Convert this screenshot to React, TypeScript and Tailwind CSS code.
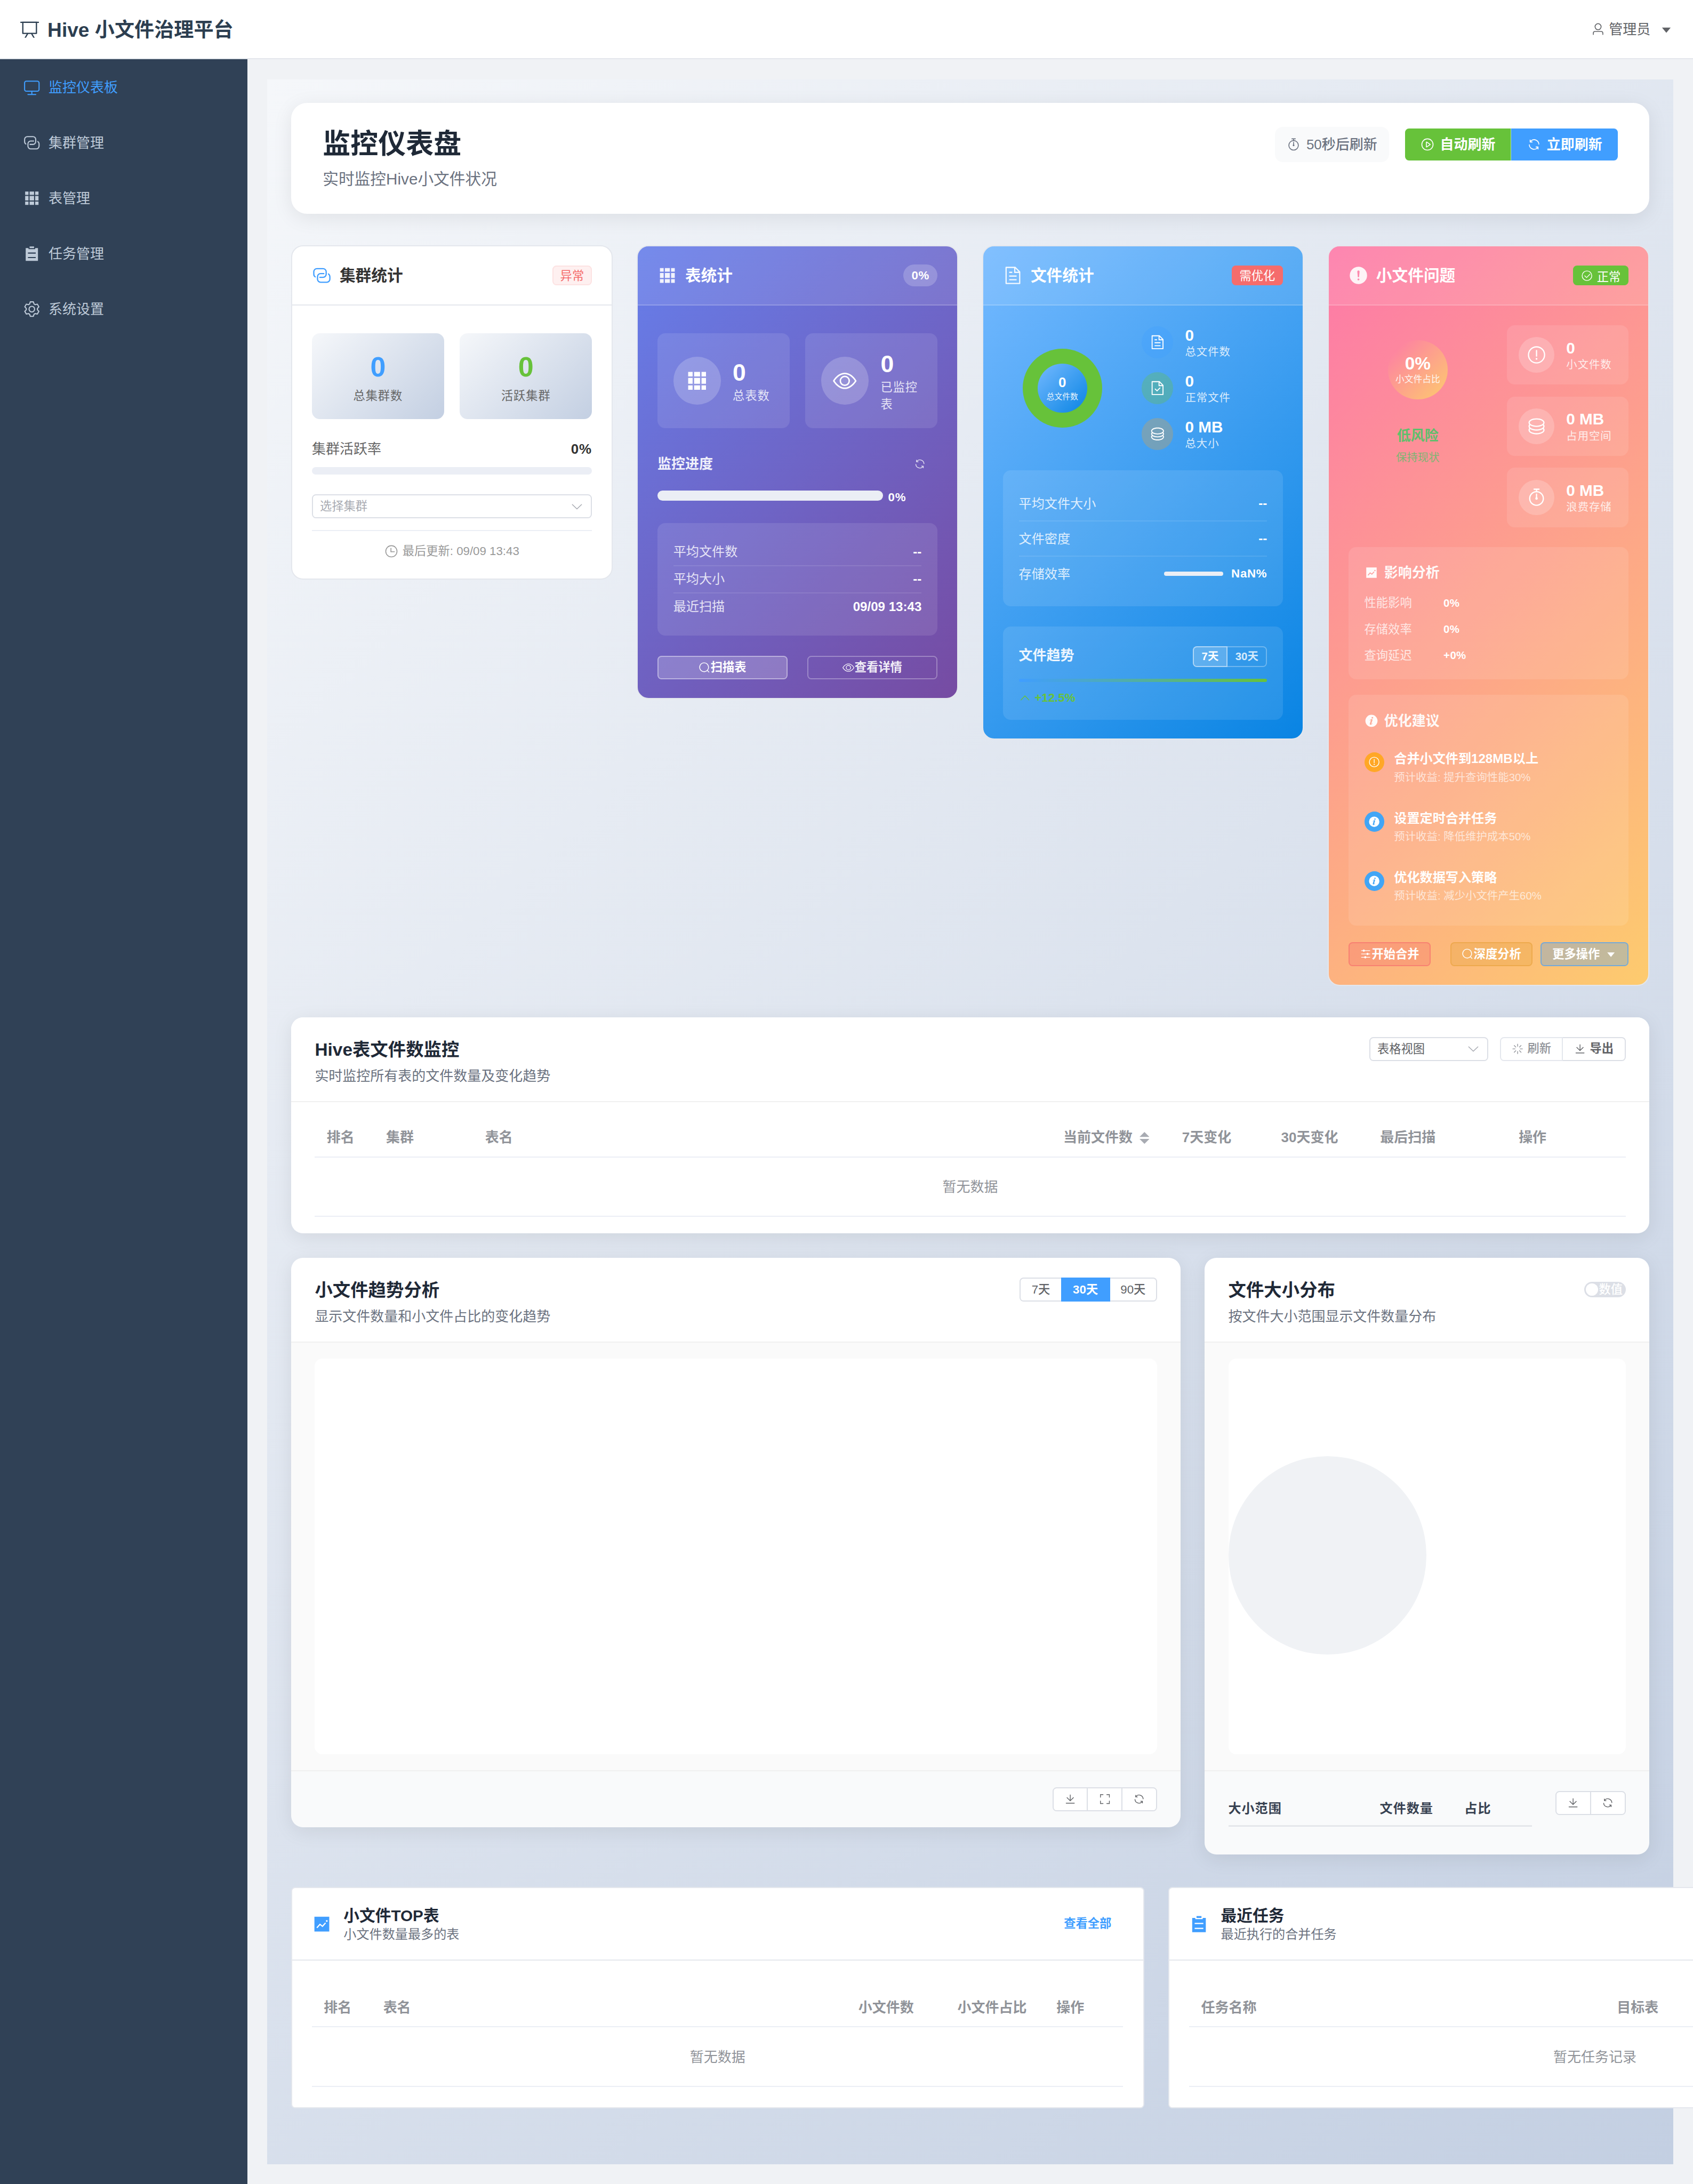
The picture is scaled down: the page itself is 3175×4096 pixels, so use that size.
import React from 'react';

const PATHS = {
  board: [
    'M32 128h960v64H32z',
    'M192 192v512h640V192zm-64-64h768v608a32 32 0 0 1-32 32H160a32 32 0 0 1-32-32z',
    'M322.176 960H248.32l144.64-250.56 55.424 32zm453.888 0h-73.856L576 741.44l55.424-32z',
  ],
  monitor: [
    'M544 768v128h192a32 32 0 1 1 0 64H288a32 32 0 1 1 0-64h192V768H192A128 128 0 0 1 64 640V256a128 128 0 0 1 128-128h640a128 128 0 0 1 128 128v384a128 128 0 0 1-128 128zM192 192a64 64 0 0 0-64 64v384a64 64 0 0 0 64 64h640a64 64 0 0 0 64-64V256a64 64 0 0 0-64-64z',
  ],
  connection: [
    'M640 384v64H448a128 128 0 0 0-128 128v128a128 128 0 0 0 128 128h320a128 128 0 0 0 128-128V576a128 128 0 0 0-64-110.848V394.88c74.56 26.368 128 97.472 128 181.056v128a192 192 0 0 1-192 192H448a192 192 0 0 1-192-192V576a192 192 0 0 1 192-192z',
    'M384 640v-64h192a128 128 0 0 0 128-128V320a128 128 0 0 0-128-128H256a128 128 0 0 0-128 128v128a128 128 0 0 0 64 110.848v70.272A192.064 192.064 0 0 1 64 448V320a192 192 0 0 1 192-192h320a192 192 0 0 1 192 192v128a192 192 0 0 1-192 192z',
  ],
  grid: [
    'M640 384v256H384V384zm64 0h192v256H704zm-64 512H384V704h256zm64 0V704h192v192zm-64-768v192H384V128zm64 0h192v192H704zM320 384v256H128V384zm0 512H128V704h192zm0-768v192H128V128z',
  ],
  list: ['M704 192h160v736H160V192h160v64h384zM288 512h448v-64H288zm0 256h448v-64H288zm96-576V96h256v96z'],
  setting: [
    'M600.704 64a32 32 0 0 1 30.464 22.208l35.2 109.376c14.784 7.232 28.928 15.36 42.432 24.512l112.384-24.192a32 32 0 0 1 34.432 15.36L944.32 364.8a32 32 0 0 1-4.032 37.504l-77.12 85.12a357.12 357.12 0 0 1 0 49.024l77.12 85.248a32 32 0 0 1 4.032 37.504l-88.704 153.6a32 32 0 0 1-34.432 15.296L708.8 803.904c-13.44 9.088-27.648 17.28-42.368 24.512l-35.264 109.376A32 32 0 0 1 600.704 960H423.296a32 32 0 0 1-30.464-22.208L357.696 828.48a351.616 351.616 0 0 1-42.56-24.64l-112.32 24.256a32 32 0 0 1-34.432-15.36L79.68 659.2a32 32 0 0 1 4.032-37.504l77.12-85.248a357.12 357.12 0 0 1 0-48.896l-77.12-85.248A32 32 0 0 1 79.68 364.8l88.704-153.6a32 32 0 0 1 34.432-15.296l112.32 24.256c13.568-9.152 27.776-17.408 42.56-24.64l35.2-109.312A32 32 0 0 1 423.232 64H600.64zm-23.424 64H446.72l-36.352 113.088-24.512 11.968a294.113 294.113 0 0 0-34.816 20.096l-22.656 15.36-116.224-25.088-65.28 113.152 79.68 88.192-1.92 27.136a293.12 293.12 0 0 0 0 40.192l1.92 27.136-79.808 88.192 65.344 113.152 116.224-25.024 22.656 15.296a294.113 294.113 0 0 0 34.816 20.096l24.512 11.968L446.72 896h130.688l36.48-113.152 24.448-11.904a288.282 288.282 0 0 0 34.752-20.096l22.592-15.296 116.288 25.024 65.28-113.152-79.744-88.192 1.92-27.136a293.12 293.12 0 0 0 0-40.256l-1.92-27.136 79.808-88.128-65.344-113.152-116.288 24.96-22.592-15.232a287.616 287.616 0 0 0-34.752-20.096l-24.448-11.904L577.344 128zM512 320a192 192 0 1 1 0 384 192 192 0 0 1 0-384m0 64a128 128 0 1 0 0 256 128 128 0 0 0 0-256',
  ],
  user: [
    'M512 512a192 192 0 1 0 0-384 192 192 0 0 0 0 384m0 64a256 256 0 1 1 0-512 256 256 0 0 1 0 512m320 320v-96a96 96 0 0 0-96-96H288a96 96 0 0 0-96 96v96a32 32 0 1 1-64 0v-96a160 160 0 0 1 160-160h448a160 160 0 0 1 160 160v96a32 32 0 1 1-64 0',
  ],
  caret: ['m192 384 320 384 320-384z'],
  timer: [
    'M512 896a320 320 0 1 0 0-640 320 320 0 0 0 0 640m0 64a384 384 0 1 1 0-768 384 384 0 0 1 0 768',
    'M512 320a32 32 0 0 1 32 32l-.512 224a32 32 0 1 1-64 0L480 352a32 32 0 0 1 32-32',
    'M448 576a64 64 0 1 0 128 0 64 64 0 1 0-128 0m96-448v128h-64V128h-96a32 32 0 0 1 0-64h256a32 32 0 1 1 0 64z',
  ],
  play: [
    'M512 64a448 448 0 1 1 0 896 448 448 0 0 1 0-896m0 832a384 384 0 0 0 0-768 384 384 0 0 0 0 768m-48-247.616L668.608 512 464 375.616zm10.624-342.656 249.472 166.336a48 48 0 0 1 0 79.872L474.624 718.272A48 48 0 0 1 400 678.336V345.6a48 48 0 0 1 74.624-39.936z',
  ],
  refresh: [
    'M771.776 794.88A384 384 0 0 1 128 512h64a320 320 0 0 0 555.712 216.448H654.72a32 32 0 1 1 0-64h149.056a32 32 0 0 1 32 32v148.928a32 32 0 1 1-64 0v-50.56zM276.288 295.616h92.992a32 32 0 0 1 0 64H220.16a32 32 0 0 1-32-32V178.56a32 32 0 0 1 64 0v50.56A384 384 0 0 1 896.128 512h-64a320 320 0 0 0-555.776-216.384z',
  ],
  view: [
    'M512 160c320 0 512 352 512 352S832 864 512 864 0 512 0 512s192-352 512-352m0 64c-225.28 0-384.128 208.064-436.8 288 52.608 79.872 211.456 288 436.8 288 225.28 0 384.128-208.064 436.8-288-52.608-79.872-211.456-288-436.8-288m0 64a224 224 0 1 1 0 448 224 224 0 0 1 0-448m0 64a160.192 160.192 0 0 0-160 160c0 88.192 71.744 160 160 160s160-71.808 160-160-71.744-160-160-160',
  ],
  search: [
    'm795.904 750.72 124.992 124.928a32 32 0 0 1-45.248 45.248L750.656 795.904a416 416 0 1 1 45.248-45.248zM480 832a352 352 0 1 0 0-704 352 352 0 0 0 0 704',
  ],
  document: [
    'M832 384H576V128H192v768h640zm-26.496-64L640 154.496V320zM160 64h480l256 256v608a32 32 0 0 1-32 32H160a32 32 0 0 1-32-32V96a32 32 0 0 1 32-32m160 448h384v64H320zm0-192h160v64H320zm0 384h384v64H320z',
  ],
  docChecked: [
    'M805.504 320 640 154.496V320zM832 384H576V128H192v768h640zM160 64h480l256 256v608a32 32 0 0 1-32 32H160a32 32 0 0 1-32-32V96a32 32 0 0 1 32-32m318.4 582.144 180.992-180.992L704.64 510.4 478.4 736.64 320 578.304l45.248-45.312z',
  ],
  coin: [
    'm161.92 580.736 29.888 58.88C171.328 659.776 160 681.728 160 704c0 82.304 155.328 160 352 160s352-77.696 352-160c0-22.272-11.392-44.16-31.808-64.32l30.464-58.432C903.936 615.808 928 657.664 928 704c0 129.728-188.544 224-416 224S96 833.728 96 704c0-46.592 24.32-88.576 65.92-123.264z',
    'm161.92 388.736 29.888 58.88C171.328 467.84 160 489.792 160 512c0 82.304 155.328 160 352 160s352-77.696 352-160c0-22.272-11.392-44.16-31.808-64.32l30.464-58.432C903.936 423.808 928 465.664 928 512c0 129.728-188.544 224-416 224S96 641.728 96 512c0-46.592 24.32-88.576 65.92-123.264z',
    'M512 544c-227.456 0-416-94.272-416-224S284.544 96 512 96s416 94.272 416 224-188.544 224-416 224m0-64c196.672 0 352-77.696 352-160S708.672 160 512 160s-352 77.696-352 160 155.328 160 352 160',
  ],
  warningFilled: [
    'M512 64a448 448 0 1 1 0 896 448 448 0 0 1 0-896m0 192a58.432 58.432 0 0 0-58.24 63.744l23.36 256.384a35.072 35.072 0 0 0 69.76 0l23.296-256.384A58.432 58.432 0 0 0 512 256m0 512a51.2 51.2 0 1 0 0-102.4 51.2 51.2 0 0 0 0 102.4',
  ],
  warning: [
    'M512 64a448 448 0 1 1 0 896 448 448 0 0 1 0-896m0 832a384 384 0 0 0 0-768 384 384 0 0 0 0 768m48-176a48 48 0 1 1-96 0 48 48 0 0 1 96 0m-48-464a32 32 0 0 1 32 32v288a32 32 0 0 1-64 0V288a32 32 0 0 1 32-32',
  ],
  check: [
    'M512 896a384 384 0 1 0 0-768 384 384 0 0 0 0 768m0 64a448 448 0 1 1 0-896 448 448 0 0 1 0 896',
    'M745.344 361.344a32 32 0 0 1 45.312 45.312l-288 288a32 32 0 0 1-45.312 0l-160-160a32 32 0 1 1 45.312-45.312L480 626.752z',
  ],
  clock: [
    'M512 896a384 384 0 1 0 0-768 384 384 0 0 0 0 768m0 64a448 448 0 1 1 0-896 448 448 0 0 1 0 896',
    'M480 256a32 32 0 0 1 32 32v256a32 32 0 0 1-64 0V288a32 32 0 0 1 32-32',
    'M480 512h256q32 0 32 32t-32 32H480q-32 0-32-32t32-32',
  ],
  arrowDown: [
    'M831.872 340.864 512 652.672 192.128 340.864a30.592 30.592 0 0 0-42.752 0 29.12 29.12 0 0 0 0 41.6L489.664 714.24a32 32 0 0 0 44.672 0l340.288-331.712a29.12 29.12 0 0 0 0-41.728 30.592 30.592 0 0 0-42.752 0z',
  ],
  arrowUp: [
    'm488.832 344.32-339.84 356.672a32 32 0 0 0 0 44.16l.384.384a29.44 29.44 0 0 0 42.688 0l320-335.872 319.872 335.872a29.44 29.44 0 0 0 42.688 0l.384-.384a32 32 0 0 0 0-44.16L535.168 344.32a32 32 0 0 0-46.336 0',
  ],
  trend: [
    'M128 896V128h768v768zm291.712-327.296 128 102.4 180.16-201.792-47.744-42.624-139.84 156.608-128-102.4-180.16 201.792 47.744 42.624 139.84-156.608zM816 352a48 48 0 1 0-96 0 48 48 0 0 0 96 0',
  ],
  info: [
    'M512 64a448 448 0 1 1 0 896.064A448 448 0 0 1 512 64m67.2 275.072c33.28 0 60.288-23.104 60.288-57.344s-27.072-57.344-60.288-57.344c-33.28 0-60.16 23.104-60.16 57.344s26.88 57.344 60.16 57.344M590.912 699.2c0-6.848 2.368-24.64 1.024-34.752l-52.608 60.544c-10.88 11.456-24.512 19.392-30.912 17.28a12.992 12.992 0 0 1-8.256-14.72l87.68-276.992c7.168-35.136-12.544-67.2-54.336-71.296-44.096 0-108.992 44.736-148.48 101.504 0 6.784-1.28 23.68.064 33.792l52.544-60.608c10.88-11.328 23.552-19.328 29.952-17.152a12.8 12.8 0 0 1 7.808 16.128L388.48 728.576c-10.048 32.256 8.96 63.872 55.04 71.04 67.84 0 107.904-43.648 147.456-100.416z',
  ],
  operation: [
    'M389.44 768a96.064 96.064 0 0 1 181.12 0H896v64H570.56a96.064 96.064 0 0 1-181.12 0H128v-64zm192-288a96.064 96.064 0 0 1 181.12 0H896v64H762.56a96.064 96.064 0 0 1-181.12 0H128v-64zm-320-288a96.064 96.064 0 0 1 181.12 0H896v64H442.56a96.064 96.064 0 0 1-181.12 0H128v-64z',
  ],
  download: [
    'M160 832h704a32 32 0 1 1 0 64H160a32 32 0 1 1 0-64m384-253.696 236.288-236.352 45.248 45.248L508.8 704 192 387.2l45.248-45.248L480 584.704V128h64z',
  ],
  fullscreen: [
    'm160 96.064 192 .192a32 32 0 0 1 0 64l-192-.192V352a32 32 0 0 1-64 0V96h64zm0 831.872V928H96V672a32 32 0 1 1 64 0v191.936l192-.192a32 32 0 1 1 0 64zM864 96.064V96h64v256a32 32 0 1 1-64 0V160.064l-192 .192a32 32 0 1 1 0-64zm0 831.872-192-.192a32 32 0 0 1 0-64l192 .192V672a32 32 0 1 1 64 0v256h-64z',
  ],
  loading: [
    'M512 64a32 32 0 0 1 32 32v192a32 32 0 0 1-64 0V96a32 32 0 0 1 32-32m0 640a32 32 0 0 1 32 32v192a32 32 0 1 1-64 0V736a32 32 0 0 1 32-32m448-192a32 32 0 0 1-32 32H736a32 32 0 1 1 0-64h192a32 32 0 0 1 32 32m-640 0a32 32 0 0 1-32 32H96a32 32 0 0 1 0-64h192a32 32 0 0 1 32 32M195.2 195.2a32 32 0 0 1 45.248 0L376.32 331.008a32 32 0 0 1-45.248 45.248L195.2 240.448a32 32 0 0 1 0-45.248zm452.544 452.544a32 32 0 0 1 45.248 0L828.8 783.552a32 32 0 0 1-45.248 45.248L647.744 692.992a32 32 0 0 1 0-45.248zM828.8 195.264a32 32 0 0 1 0 45.184L692.992 376.32a32 32 0 0 1-45.248-45.248l135.808-135.808a32 32 0 0 1 45.248 0m-452.544 452.48a32 32 0 0 1 0 45.248L240.448 828.8a32 32 0 0 1-45.248-45.248l135.808-135.808a32 32 0 0 1 45.248 0z',
  ],
} satisfies Record<string, string[]>;

type IconName = keyof typeof PATHS;

function Icon({ name, className = '' }: { name: IconName; className?: string }) {
  return (
    <svg viewBox="0 0 1024 1024" fill="currentColor" className={`shrink-0 ${className}`}>
      {PATHS[name].map((d) => (
        <path key={d.slice(0, 24)} d={d} />
      ))}
    </svg>
  );
}

const MENU: { icon: IconName; label: string; active?: boolean }[] = [
  { icon: 'monitor', label: '监控仪表板', active: true },
  { icon: 'connection', label: '集群管理' },
  { icon: 'grid', label: '表管理' },
  { icon: 'list', label: '任务管理' },
  { icon: 'setting', label: '系统设置' },
];

function TopBar() {
  return (
    <header className="flex h-[60px] shrink-0 items-center justify-between border-b-[1.08px] border-[#e4e7ed] bg-white px-5">
      <div className="flex items-center gap-2 text-[#2c3e50]">
        <Icon name="board" className="size-5" />
        <h1 className="pt-0.5 text-xl font-bold">Hive 小文件治理平台</h1>
      </div>
      <div className="flex items-center text-sm leading-5 text-[#606266]">
        <Icon name="user" className="mr-1 size-3.5" />
        <span className="pt-px">管理员</span>
        <Icon name="caret" className="ml-[9px] size-3.5" />
      </div>
    </header>
  );
}

function Sidebar() {
  return (
    <aside className="w-[250px] shrink-0 bg-[#304156]">
      {MENU.map((m) => (
        <div
          key={m.label}
          className={`flex h-14 items-center px-5 text-sm ${m.active ? 'text-[#409eff]' : 'text-[#bfcbd9]'}`}
        >
          <span className="mr-[5px] flex w-6 justify-center">
            <Icon name={m.icon} className="size-[18px]" />
          </span>
          <span className="pt-px">{m.label}</span>
        </div>
      ))}
    </aside>
  );
}

function PageHeader() {
  return (
    <section className="flex h-28 items-start justify-between rounded-2xl bg-white px-8 py-6 shadow-[0_4px_20px_rgba(0,0,0,0.08)]">
      <div>
        <h2 className="pt-px text-[28px] leading-[34px] font-bold text-[#1f2937]">监控仪表盘</h2>
        <p className="mt-[7px] text-base leading-[22px] text-[#6b7280]">实时监控Hive小文件状况</p>
      </div>
      <div className="flex items-center gap-4">
        <div className="flex h-9 items-center gap-1.5 rounded-lg bg-[#f9fafb] px-3 text-sm text-[#6b7280]">
          <Icon name="timer" className="size-3.5" />
          <span className="pt-px font-medium">50秒后刷新</span>
        </div>
        <div className="flex h-8 text-sm font-bold text-white">
          <button className="flex w-[107.5px] items-center justify-center gap-1.5 rounded-l border-r border-white/50 bg-[#67c23a]">
            <Icon name="play" className="size-3.5" />
            <span className="pt-px">自动刷新</span>
          </button>
          <button className="flex w-[107.5px] items-center justify-center gap-1.5 rounded-r bg-[#409eff]">
            <Icon name="refresh" className="size-3.5" />
            <span className="pt-px">立即刷新</span>
          </button>
        </div>
      </div>
    </section>
  );
}

function StatCard({
  icon,
  title,
  tag,
  tone,
  children,
}: {
  icon: IconName;
  title: string;
  tag: React.ReactNode;
  tone: string;
  children: React.ReactNode;
}) {
  const plain = tone === 'bg-white';
  return (
    <article className={`flex w-[325px] flex-col overflow-hidden rounded-xl border-[1.08px] border-[#e4e7ed] ${tone}`}>
      <div
        className={`flex h-[59.5px] shrink-0 items-center justify-between border-b-[1.08px] px-5 ${
          plain ? 'border-[#e4e7ed] text-[#333]' : 'border-white/20 bg-white/10 text-white'
        }`}
      >
        <div className="flex items-center gap-2">
          <Icon name={icon} className={`size-5 ${plain ? 'text-[#409eff]' : 'opacity-90'}`} />
          <h3 className="pt-px text-base font-bold">{title}</h3>
        </div>
        {tag}
      </div>
      <div className="flex flex-col px-5">{children}</div>
    </article>
  );
}

function ClusterCard() {
  const boxes = [
    { label: '总集群数', color: 'text-[#409eff]' },
    { label: '活跃集群', color: 'text-[#67c23a]' },
  ];
  return (
    <StatCard
      icon="connection"
      title="集群统计"
      tone="bg-white"
      tag={
        <span className="flex h-5 items-center rounded border-[1.08px] border-[#fde2e2] bg-[#fef0f0] px-[7px] text-xs text-[#f56c6c]">
          <span className="pt-px">异常</span>
        </span>
      }
    >
      <div className="mt-7 flex gap-4">
        {boxes.map((b) => (
          <div
            key={b.label}
            className="flex h-[87px] flex-1 flex-col items-center rounded-lg bg-linear-[135deg,#f5f7fa,#c3cfe2] pt-4"
          >
            <span className={`text-[28px] leading-[36px] font-bold ${b.color}`}>0</span>
            <span className="mt-[3px] text-xs leading-[17px] tracking-[0.5px] text-[#666]">{b.label}</span>
          </div>
        ))}
      </div>
      <div className="mt-5 flex h-5 items-center justify-between pt-px text-sm">
        <span className="text-[#666]">集群活跃率</span>
        <span className="font-bold tracking-[0.5px] text-[#333]">0%</span>
      </div>
      <div className="mt-2 h-2 rounded-full bg-[#ebeef5]" />
      <div className="mt-5 flex h-6 items-center justify-between rounded border-[1.08px] border-[#dcdfe6] px-[7px] text-xs text-[#a8abb2]">
        选择集群
        <Icon name="arrowDown" className="size-3.5" />
      </div>
      <div className="mt-3 mb-[19.5px] flex items-center justify-center gap-1 border-t-[1.08px] border-[#ebeef5] pt-3 text-xs leading-[16.5px] text-[#999]">
        <Icon name="clock" className="size-3.5" />
        最后更新: 09/09 13:43
      </div>
    </StatCard>
  );
}

function TableStatsCard() {
  const rows = [
    ['平均文件数', '--'],
    ['平均大小', '--'],
    ['最近扫描', '09/09 13:43'],
  ];
  const boxes: { icon: IconName; label: string }[] = [
    { icon: 'grid', label: '总表数' },
    { icon: 'view', label: '已监控表' },
  ];
  return (
    <StatCard
      icon="grid"
      title="表统计"
      tone="bg-linear-[135deg,#667eea,#764ba2]"
      tag={
        <span className="flex h-[22.4px] w-[34.4px] items-center justify-center rounded-full bg-white/20 text-xs font-bold tracking-[0.3px]">
          0%
        </span>
      }
    >
      <div className="mt-7 flex gap-4">
        {boxes.map((b) => (
          <div key={b.label} className="flex h-24 flex-1 items-center gap-3 rounded-lg bg-white/10 px-4">
            <span className="flex size-12 shrink-0 items-center justify-center rounded-full bg-white/20 text-white">
              <Icon name={b.icon} className="size-6" />
            </span>
            <div>
              <div className="text-2xl leading-[30.8px] font-bold text-white">0</div>
              <div className="text-xs leading-[16.8px] tracking-[0.5px] text-white/80">{b.label}</div>
            </div>
          </div>
        ))}
      </div>
      <div className="mt-6 flex h-6 items-center justify-between pr-3">
        <span className="pt-px text-sm font-bold text-white/90">监控进度</span>
        <Icon name="refresh" className="size-3 text-white/80" />
      </div>
      <div className="mt-[13px] flex h-3.5 items-center gap-[5px]">
        <div className="h-2.5 w-[228px] rounded-full bg-[#ebeef5]" />
        <span className="mt-1 text-xs leading-none font-bold tracking-[0.5px] text-white">0%</span>
      </div>
      <div className="mt-[21px] h-[113.3px] rounded-lg bg-white/10 p-4 text-[13px]">
        {rows.map(([k, v], i) => (
          <div
            key={k}
            className={`flex h-[27.4px] items-center justify-between ${i < 2 ? 'border-b-[1.08px] border-white/10' : ''}`}
          >
            <span className="text-white/80">{k}</span>
            <span className="font-bold text-white">{v}</span>
          </div>
        ))}
      </div>
      <div className="mt-[20.4px] mb-[19px] flex gap-5 text-xs font-bold">
        <button className="flex h-6 flex-1 items-center justify-center rounded border-[1.08px] border-white/40 bg-white/20 text-white">
          <Icon name="search" className="size-3" />
          扫描表
        </button>
        <button className="flex h-6 flex-1 items-center justify-center rounded border-[1.08px] border-white/30 text-white/90">
          <Icon name="view" className="size-3" />
          查看详情
        </button>
      </div>
    </StatCard>
  );
}

function FileStatsCard() {
  const items: { icon: IconName; value: string; label: string; bg: string }[] = [
    { icon: 'document', value: '0', label: '总文件数', bg: 'bg-[#409eff]/30' },
    { icon: 'docChecked', value: '0', label: '正常文件', bg: 'bg-[#67c23a]/30' },
    { icon: 'coin', value: '0 MB', label: '总大小', bg: 'bg-[#e6a23c]/30' },
  ];
  return (
    <StatCard
      icon="document"
      title="文件统计"
      tone="bg-linear-[135deg,#74b9ff,#0984e3]"
      tag={
        <span className="flex h-5 items-center rounded bg-[#f56c6c] px-2 text-xs text-white">
          <span className="pt-px">需优化</span>
        </span>
      }
    >
      <div className="mt-5 flex gap-5">
        <div className="flex w-[120px] items-center justify-center">
          <div className="flex size-20 items-center justify-center rounded-full bg-[#67c23a]">
            <div className="flex size-[50px] flex-col items-center justify-center rounded-full bg-linear-[135deg,#74b9ff,#0984e3] text-white">
              <span className="text-sm leading-[17px] font-bold">0</span>
              <span className="text-[8px] leading-[11px] opacity-90">总文件数</span>
            </div>
          </div>
        </div>
        <div className="flex flex-col gap-3">
          {items.map((it) => (
            <div key={it.label} className="flex h-[34.4px] items-center gap-3 text-white">
              <span className={`flex size-8 items-center justify-center rounded-full ${it.bg}`}>
                <Icon name={it.icon} className="size-4" />
              </span>
              <div>
                <div className="text-base leading-5 font-bold">{it.value}</div>
                <div className="text-[11px] leading-[14.4px] tracking-[0.5px] opacity-80">{it.label}</div>
              </div>
            </div>
          ))}
        </div>
      </div>
      <div className="mt-[19.5px] h-[137px] rounded-lg bg-white/10 p-4 text-[13px]">
        {['平均文件大小', '文件密度'].map((k) => (
          <div key={k} className="flex h-[35.5px] items-center justify-between border-b-[1.08px] border-white/10">
            <span className="pt-px text-white/80">{k}</span>
            <span className="font-bold text-white">--</span>
          </div>
        ))}
        <div className="flex h-[34.5px] items-center">
          <span className="flex-1 pt-px text-white/80">存储效率</span>
          <span className="mr-2 h-1 w-[60px] rounded-full bg-[#ebeef5]" />
          <span className="text-xs font-bold tracking-[0.4px] text-white">NaN%</span>
        </div>
      </div>
      <div className="mt-[20.5px] mb-[19px] h-[94.5px] rounded-lg bg-white/10 px-4 pt-4">
        <div className="flex h-[29px] items-center justify-between">
          <span className="pb-[2px] text-sm font-bold text-white/90">文件趋势</span>
          <div className="flex h-[21px] text-[11px] font-bold">
            <span className="flex w-[35.2px] items-center justify-center rounded-l border-[1.08px] border-white/50 bg-white/20 text-white">
              7天
            </span>
            <span className="flex w-10 items-center justify-center rounded-r border-[1.08px] border-l-0 border-white/30 text-white/80">
              30天
            </span>
          </div>
        </div>
        <div className="mt-2 h-[3px] rounded-full bg-linear-[90deg,#409eff,#67c23a]" />
        <div className="mt-2 flex h-4 items-center gap-1 text-xs font-bold text-[#67c23a]">
          <Icon name="arrowUp" className="size-3" />
          +12.5%
        </div>
      </div>
    </StatCard>
  );
}

function SmallFileCard() {
  const metrics: { icon: IconName; value: string; label: string }[] = [
    { icon: 'warning', value: '0', label: '小文件数' },
    { icon: 'coin', value: '0 MB', label: '占用空间' },
    { icon: 'timer', value: '0 MB', label: '浪费存储' },
  ];
  const impact = [
    ['性能影响', '0%'],
    ['存储效率', '0%'],
    ['查询延迟', '+0%'],
  ];
  const tips: { icon: IconName; bg: string; title: string; gain: string }[] = [
    { icon: 'warning', bg: 'bg-[#ffa726]', title: '合并小文件到128MB以上', gain: '预计收益: 提升查询性能30%' },
    { icon: 'info', bg: 'bg-[#42a5f5]', title: '设置定时合并任务', gain: '预计收益: 降低维护成本50%' },
    { icon: 'info', bg: 'bg-[#42a5f5]', title: '优化数据写入策略', gain: '预计收益: 减少小文件产生60%' },
  ];
  return (
    <StatCard
      icon="warningFilled"
      title="小文件问题"
      tone="bg-linear-[135deg,#fd79a8,#fdcb6e]"
      tag={
        <span className="flex h-5 items-center gap-1 rounded bg-[#67c23a] px-2 text-xs text-white">
          <Icon name="check" className="size-3" />
          <span className="mt-[3px]">正常</span>
        </span>
      }
    >
      <div className="mt-5 flex gap-5">
        <div className="flex w-[140px] flex-col items-center pt-[15px]">
          <div className="flex size-[60px] flex-col items-center justify-center rounded-full bg-linear-[135deg,#fd79a8,#fdcb6e] text-white">
            <span className="text-lg leading-5 font-bold">0%</span>
            <span className="text-[9px] leading-[13px] opacity-90">小文件占比</span>
          </div>
          <span className="mt-[27px] text-sm leading-5 font-bold text-[#5fbf6c]">低风险</span>
          <span className="mt-1 text-[11px] leading-4 text-[#5fbf6c] opacity-80">保持现状</span>
        </div>
        <div className="flex flex-1 flex-col gap-3">
          {metrics.map((m) => (
            <div key={m.label} className="flex h-[60px] items-center gap-3 rounded-lg bg-white/10 px-3 text-white">
              <span className="flex size-9 items-center justify-center rounded-full bg-white/20">
                <Icon name={m.icon} className="size-5" />
              </span>
              <div>
                <div className="text-base leading-5 font-bold">{m.value}</div>
                <div className="text-[11px] leading-[14.4px] tracking-[0.5px] opacity-80">{m.label}</div>
              </div>
            </div>
          ))}
        </div>
      </div>
      <div className="mt-5 h-[133.5px] rounded-lg bg-white/10 p-4">
        <div className="flex h-5 items-center gap-1.5 text-sm font-bold text-white/95">
          <Icon name="trend" className="size-3.5" />
          <span className="pt-px">影响分析</span>
        </div>
        <div className="mt-3 flex flex-col gap-2.5">
          {impact.map(([k, v]) => (
            <div key={k} className="flex h-[16.5px] items-center pt-px">
              <span className="w-20 text-xs text-white/75">{k}</span>
              <span className="text-[11px] font-bold tracking-[0.2px] text-white">{v}</span>
            </div>
          ))}
        </div>
      </div>
      <div className="mt-4 h-[233px] rounded-lg bg-white/10 p-4">
        <div className="mb-[9px] flex h-5 items-center gap-1.5 text-sm font-bold text-white/95">
          <Icon name="info" className="size-3.5" />
          <span className="pt-px">优化建议</span>
        </div>
        {tips.map((t) => (
          <div key={t.title} className="flex h-[60px] gap-2.5 pt-[10.5px] text-white">
            <span className={`mt-[2.5px] flex size-5 items-center justify-center rounded-full ${t.bg}`}>
              <Icon name={t.icon} className="size-3" />
            </span>
            <div>
              <div className="text-[13px] leading-[18px] font-bold">{t.title}</div>
              <div className="mt-0.5 text-[11px] leading-4 opacity-65">{t.gain}</div>
            </div>
          </div>
        ))}
      </div>
      <div className="mt-[16.8px] mb-[19px] flex text-xs font-bold text-white">
        <button className="flex h-6 w-[83px] items-center justify-center rounded border-[1.08px] border-[#f56c6c]/60 bg-[#f56c6c]/30">
          <Icon name="operation" className="size-3" />
          开始合并
        </button>
        <button className="ml-5 flex h-6 w-[83px] items-center justify-center rounded border-[1.08px] border-[#e6a23c]/60 bg-[#e6a23c]/30">
          <Icon name="search" className="size-3" />
          深度分析
        </button>
        <button className="ml-2 flex h-6 flex-1 items-center justify-center gap-[5px] rounded border-[1.08px] border-[#409eff]/60 bg-[#409eff]/30">
          更多操作
          <Icon name="caret" className="size-3" />
        </button>
      </div>
    </StatCard>
  );
}

function PanelHead({ title, sub, children }: { title: string; sub: string; children: React.ReactNode }) {
  return (
    <div className="flex h-[85.5px] shrink-0 items-start justify-between border-b-[1.08px] border-[#f0f0f0] bg-white px-6 pt-5">
      <div className="pt-[0.6px]">
        <h3 className="text-lg leading-[25px] font-bold text-[#1f2937]">{title}</h3>
        <p className="mt-1 text-sm leading-5 text-[#6b7280]">{sub}</p>
      </div>
      {children}
    </div>
  );
}

function HiveTable() {
  const head = 'text-sm font-bold text-[#909399] pl-3 shrink-0';
  return (
    <section className="mt-8 flex h-[218px] flex-col overflow-hidden rounded-xl bg-white">
      <PanelHead title="Hive表文件数监控" sub="实时监控所有表的文件数量及变化趋势">
        <div className="flex gap-3">
          <div className="flex h-6 w-[120px] items-center justify-between rounded border-[1.08px] border-[#dcdfe6] px-[7px] text-xs text-[#606266]">
            <span className="pt-px">表格视图</span>
            <Icon name="arrowDown" className="size-3.5 text-[#a8abb2]" />
          </div>
          <div className="flex h-6 text-xs font-bold">
            <button className="flex w-[63.5px] items-center justify-center gap-1 rounded-l border-[1.08px] border-[#e4e7ed] font-medium text-[#909399]">
              <Icon name="loading" className="size-3" />
              刷新
            </button>
            <button className="flex w-[63.5px] items-center justify-center gap-1 rounded-r border-[1.08px] border-l-0 border-[#dcdfe6] text-[#606266]">
              <Icon name="download" className="size-3" />
              导出
            </button>
          </div>
        </div>
      </PanelHead>
      <div className="px-6 pt-4">
        <div className="flex h-10 items-center border-b-[1.08px] border-[#ebeef5] pt-[1.6px]">
          <div className={`${head} w-[60px]`}>排名</div>
          <div className={`${head} w-[100px]`}>集群</div>
          <div className={`${head} w-[584px]`}>表名</div>
          <div className={`${head} flex w-[120px] items-center`}>
            当前文件数
            <svg viewBox="0 0 10 12" className="ml-[7px] h-3 w-2.5" fill="#a8abb2">
              <path d="M5 0 10 5H0zM5 12 0 7h10z" />
            </svg>
          </div>
          <div className={`${head} w-[100px]`}>7天变化</div>
          <div className={`${head} w-[100px]`}>30天变化</div>
          <div className={`${head} w-[140px]`}>最后扫描</div>
          <div className={`${head} w-[120px]`}>操作</div>
        </div>
        <div className="flex h-[60px] items-center justify-center border-b-[1.08px] border-[#ebeef5] pt-[1.6px] text-sm text-[#909399]">
          暂无数据
        </div>
      </div>
    </section>
  );
}

function IconGroup({ icons, width }: { icons: IconName[]; width: string }) {
  return (
    <div className={`flex h-6 rounded border-[1.08px] border-[#dcdfe6] bg-white text-[#606266] ${width}`}>
      {icons.map((name, i) => (
        <button
          key={name}
          className={`flex flex-1 items-center justify-center ${i > 0 ? 'border-l-[1.08px] border-[#dcdfe6]' : ''}`}
        >
          <Icon name={name} className="size-3" />
        </button>
      ))}
    </div>
  );
}

function Charts() {
  return (
    <div className="mt-[25px] flex h-[603.4px] items-start gap-6">
      <section className="flex w-[898.67px] flex-col rounded-xl shadow-[0_4px_20px_rgba(0,0,0,0.08)]">
        <div className="overflow-hidden rounded-xl">
          <PanelHead title="小文件趋势分析" sub="显示文件数量和小文件占比的变化趋势">
            <div className="flex h-6 text-xs font-medium text-[#606266]">
              <span className="flex w-[41.6px] items-center justify-center rounded-l border-[1.08px] border-r-0 border-[#dcdfe6]">7天</span>
              <span className="flex w-[49.6px] items-center justify-center bg-[#409eff] font-bold text-white">30天</span>
              <span className="flex w-[47.5px] items-center justify-center rounded-r border-[1.08px] border-l-0 border-[#dcdfe6]">90天</span>
            </div>
          </PanelHead>
          <div className="bg-[#fafafa] px-6 py-4">
            <div className="h-[400px] rounded-lg bg-white" />
          </div>
          <div className="flex h-[57.5px] items-center justify-end border-t-[1.08px] border-[#f0f0f0] bg-[#f9fafb] px-6">
            <IconGroup icons={['download', 'fullscreen', 'refresh']} width="w-[105.7px]" />
          </div>
        </div>
      </section>
      <section className="flex w-[449.33px] flex-col rounded-xl shadow-[0_4px_20px_rgba(0,0,0,0.08)]">
        <div className="overflow-hidden rounded-xl">
          <PanelHead title="文件大小分布" sub="按文件大小范围显示文件数量分布">
            <div className="mt-1 flex h-4 w-[42px] items-center rounded-full bg-[#dcdfe6] pl-0.5 text-xs font-medium text-white">
              <span className="mr-px size-3 rounded-full bg-white" />
              数值
            </div>
          </PanelHead>
          <div className="bg-[#fafafa] px-6 py-4">
            <div className="flex h-[400px] items-center rounded-lg bg-white">
              <div className="mb-[2px] size-[200px] rounded-full bg-[#f0f2f5]" />
            </div>
          </div>
          <div className="flex h-[85.4px] justify-between border-t-[1.08px] border-[#f0f0f0] bg-[#f9fafb] px-6">
            <div className="mt-[22px] flex h-[34px] w-[306.5px] border-b-[2.15px] border-[#e5e7eb] pt-[5.6px] text-[13px] leading-5 font-bold tracking-[0.5px] text-[#374151]">
              <span className="w-[153px]">大小范围</span>
              <span className="w-[85.5px]">文件数量</span>
              <span>占比</span>
            </div>
            <div className="mt-5">
              <IconGroup icons={['download', 'refresh']} width="w-[70.8px]" />
            </div>
          </div>
        </div>
      </section>
    </div>
  );
}

function ListCard({
  icon,
  title,
  sub,
  action,
  columns,
  empty,
}: {
  icon: IconName;
  title: string;
  sub: string;
  action?: string;
  columns: [string, string][];
  empty: string;
}) {
  return (
    <section className="h-[223.6px] w-[861.6px] shrink-0 rounded border-[1.08px] border-[#e4e7ed] bg-white">
      <div className="flex h-[73.5px] items-center justify-between border-b-[1.08px] border-[#e4e7ed] px-5">
        <div className="flex items-center gap-3">
          <Icon name={icon} className="size-5 text-[#409eff]" />
          <div className="pt-px">
            <h3 className="text-base leading-5 font-bold text-[#1f2937]">{title}</h3>
            <p className="text-[13px] leading-[18px] text-[#6b7280]">{sub}</p>
          </div>
        </div>
        {action && <span className="pr-3 text-xs font-bold text-[#409eff]">{action}</span>}
      </div>
      <div className="px-5 pt-[27.4px]">
        <div className="flex h-10 items-center border-b-[1.08px] border-[#ebeef5] pt-[1.6px]">
          {columns.map(([label, width]) => (
            <div key={label} className={`shrink-0 pl-3 text-sm font-bold text-[#909399] ${width}`}>
              {label}
            </div>
          ))}
        </div>
        <div className="flex h-[60px] items-center justify-center border-b-[1.08px] border-[#ebeef5] pt-[1.6px] text-sm text-[#909399]">
          {empty}
        </div>
      </div>
    </section>
  );
}

export default function App() {
  return (
    <div className="flex h-[2206px] w-[1710px] flex-col overflow-hidden bg-[#f0f2f5] font-['Liberation_Sans','Noto_Sans_CJK_SC',sans-serif] [zoom:1.85673]">
      <TopBar />
      <div className="flex min-h-0 flex-1">
        <Sidebar />
        <main className="min-w-0 flex-1 p-5">
          <div className="h-full bg-linear-[135deg,#f5f7fa,#c3cfe2] p-6">
            <PageHeader />
            <div className="mt-8 flex h-[747.6px] items-start gap-6">
              <ClusterCard />
              <TableStatsCard />
              <FileStatsCard />
              <SmallFileCard />
            </div>
            <div className="rounded-xl shadow-[0_4px_20px_rgba(0,0,0,0.08)]">
              <HiveTable />
            </div>
            <Charts />
            <div className="mt-8 flex gap-[24.5px]">
              <ListCard
                icon="trend"
                title="小文件TOP表"
                sub="小文件数量最多的表"
                action="查看全部"
                empty="暂无数据"
                columns={[
                  ['排名', 'w-[60px]'],
                  ['表名', 'w-[480px]'],
                  ['小文件数', 'w-[100px]'],
                  ['小文件占比', 'w-[100px]'],
                  ['操作', 'w-[80px]'],
                ]}
              />
              <ListCard
                icon="list"
                title="最近任务"
                sub="最近执行的合并任务"
                empty="暂无任务记录"
                columns={[
                  ['任务名称', 'w-[420px]'],
                  ['目标表', 'w-[200px]'],
                ]}
              />
            </div>
          </div>
        </main>
      </div>
    </div>
  );
}
